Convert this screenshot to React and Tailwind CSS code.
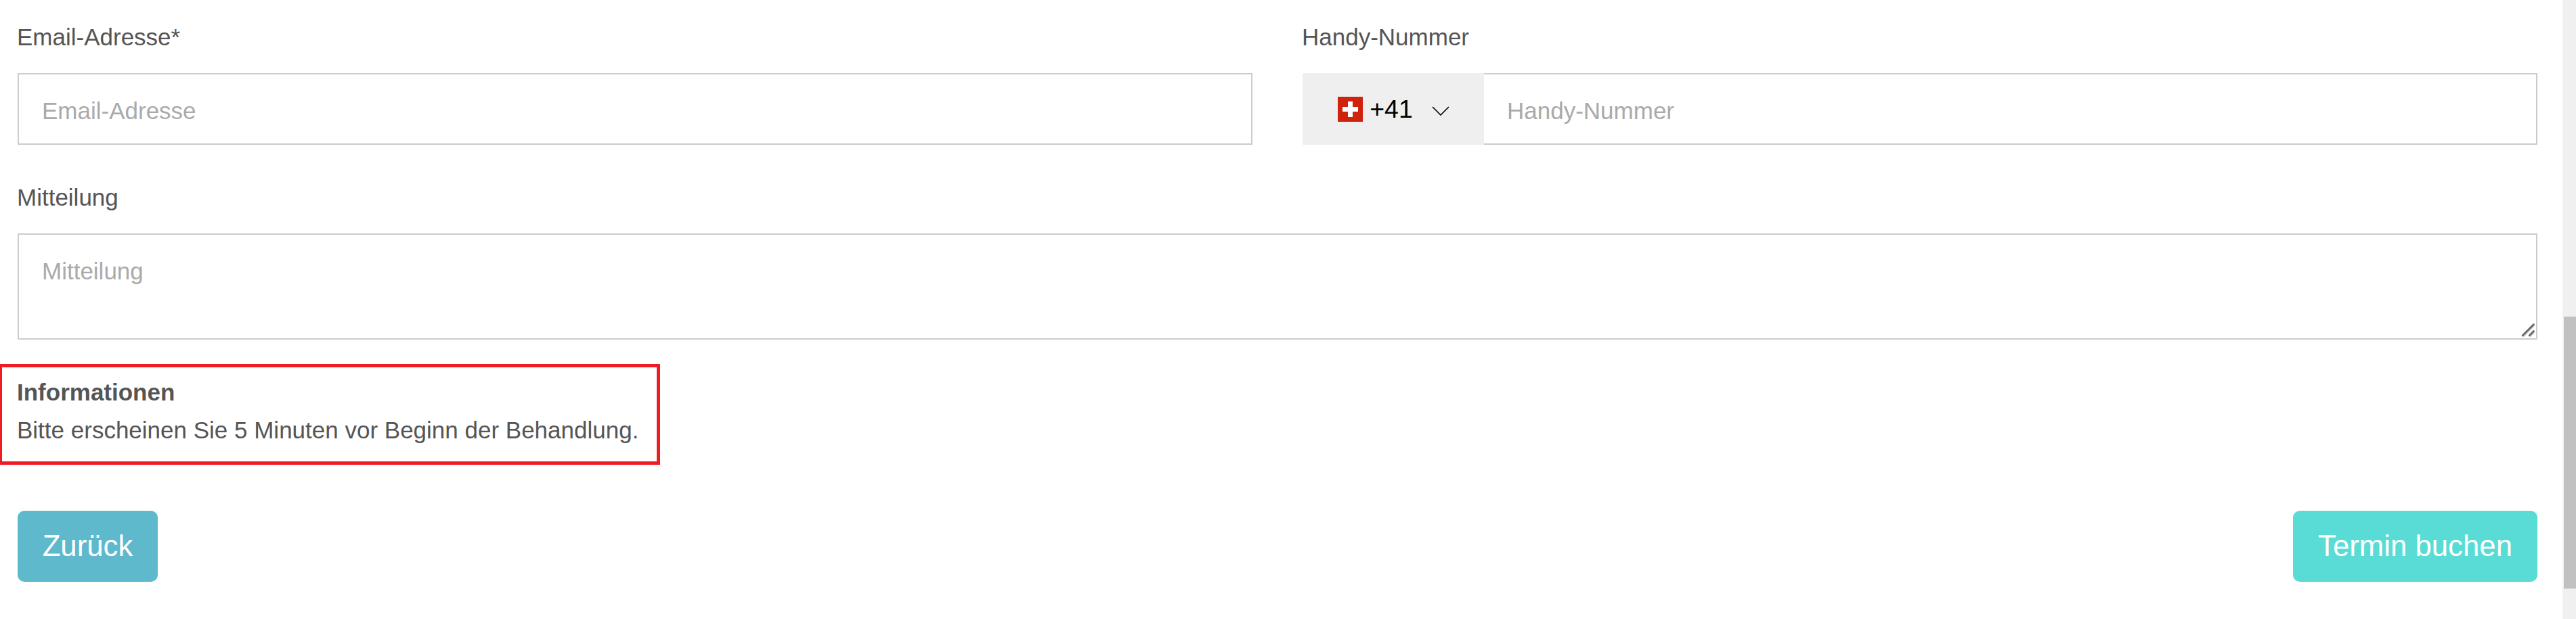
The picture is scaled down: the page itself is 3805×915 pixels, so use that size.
import React from "react";

const inputClass =
    "w-full h-[106px] px-[34px] pt-[6px] border-2 border-[#ccc] bg-white text-[35px] text-[#555] placeholder-[#aaa] outline-none";

function Field({ label, children }) {
    return (
        <div className="flex-1 min-w-0">
            <label className="block h-[53px] mb-[27px] -ml-px text-[35px] leading-[53px]">{label}</label>
            {children}
        </div>
    );
}

function SwissFlag() {
    return (
        <svg width="37" height="37" viewBox="0 0 37 37" shapeRendering="crispEdges">
            <rect width="37" height="37" fill="#cf230d" />
            <path d="M15 7h7v8h8v7h-8v8h-7v-8h-8v-7h8z" fill="#fff" />
        </svg>
    );
}

function Scrollbar() {
    return (
        <div className="w-[20px] h-full pl-[2px] pt-[468px] bg-[#f0f0f0]">
            <div className="h-[402px] bg-[#c1c1c1]" />
        </div>
    );
}

function App() {
    return (
        <div className="flex w-[3805px] h-[915px] overflow-hidden bg-white text-[#555] font-['Liberation_Sans',Arial,sans-serif]">
            <form className="flex-1 min-w-0 pl-[26px] pr-[37px] pt-[28px]">
                <div className="flex gap-[74px]">
                    <Field label="Email-Adresse*">
                        <input type="email" placeholder="Email-Adresse" className={inputClass} />
                    </Field>
                    <Field label="Handy-Nummer">
                        <div className="flex">
                            <button type="button" className="flex items-center shrink-0 w-[268px] h-[106px] pl-[52px] bg-[#efefef] text-black">
                                <SwissFlag />
                                <span className="ml-[10px] w-[64px] text-[37.5px] leading-[43px]">+41</span>
                                <svg className="ml-[28px] mt-[6px]" width="26" height="14" viewBox="0 0 26 14" fill="none" stroke="#000" strokeWidth="1.6">
                                    <path d="M1 1l12 12L25 1" />
                                </svg>
                            </button>
                            <input
                                type="tel"
                                placeholder="Handy-Nummer"
                                className="flex-1 min-w-0 h-[106px] px-[34px] pt-[6px] border-2 border-l-0 border-[#ccc] text-[35px] placeholder-[#aaa] outline-none"
                            />
                        </div>
                    </Field>
                </div>

                <div className="relative mt-[51px]">
                    <Field label="Mitteilung">
                        <textarea
                            placeholder="Mitteilung"
                            className="block w-full h-[157px] px-[34px] py-[29px] border-2 border-[#ccc] text-[35px] leading-[50px] placeholder-[#aaa] outline-none resize-none"
                        />
                    </Field>
                    {/* Resize grip */}
                    <svg className="absolute right-[3px] bottom-[3px]" width="22" height="22" viewBox="0 0 22 22" strokeLinecap="round">
                        <path d="M4.5 20L20 4.5M14.5 20l5.5-5.5" stroke="#c8c8c8" strokeWidth="2" />
                        <path d="M3 19L19.5 2.5M13 19l6.5-6.5" stroke="#666" strokeWidth="2.6" />
                    </svg>
                </div>

                <div className="w-[977px] h-[149px] mt-[36px] -ml-[28px] pl-[22px] pt-[9px] border-[5px] border-[#ef1c24] text-[35px] leading-[56px]">
                    <p className="font-bold">Informationen</p>
                    <p>Bitte erscheinen Sie 5 Minuten vor Beginn der Behandlung.</p>
                </div>

                <div className="flex justify-between mt-[68px] text-[43.75px] text-white">
                    <button type="button" className="w-[207px] h-[105px] pb-[2px] rounded-[10px] bg-[#5fb9cc]">Zurück</button>
                    <button type="submit" className="w-[361px] h-[105px] pb-[2px] rounded-[10px] bg-[#59dcd5]">Termin buchen</button>
                </div>
            </form>
            <Scrollbar />
        </div>
    );
}

export default App;
